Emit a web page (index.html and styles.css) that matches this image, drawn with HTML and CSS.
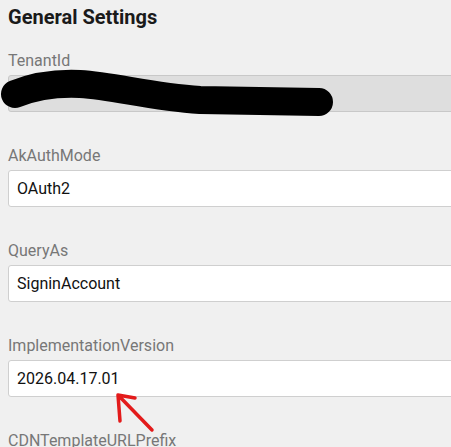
FILE: index.html
```html
<!DOCTYPE html>
<html>
<head>
<meta charset="utf-8">
<link rel="stylesheet" href="styles.css">
</head>
<body>
<div class="panel">
  <h2 class="title">General Settings</h2>
  <div class="field">
    <label class="label">TenantId</label>
    <div class="input disabled"></div>
  </div>
  <div class="field">
    <label class="label">AkAuthMode</label>
    <div class="input">OAuth2</div>
  </div>
  <div class="field">
    <label class="label">QueryAs</label>
    <div class="input">SigninAccount</div>
  </div>
  <div class="field">
    <label class="label">ImplementationVersion</label>
    <div class="input">2026.04.17.01</div>
  </div>
  <div class="field">
    <label class="label">CDNTemplateURLPrefix</label>
    <div class="input"></div>
  </div>
</div>
<svg class="scribble" width="451" height="447" viewBox="0 0 451 447">
  <path d="M15,94 C35,86 58,83 80,84 C115,86 150,97 200,100 L319,102" fill="none" stroke="#000" stroke-width="28" stroke-linecap="round" stroke-linejoin="round"/>
  <path d="M152,430 L118,395 M118,395 L135,398 M118,395 L120,421" fill="none" stroke="#e31b1b" stroke-width="3.5" stroke-linecap="round" stroke-linejoin="round"/>
</svg>
</body>
</html>
```

FILE: styles.css
```css
html, body {
  margin: 0;
  padding: 0;
  background: #f0f0f0;
  overflow: hidden;
  width: 451px;
  height: 447px;
  position: relative;
}
body {
  font-family: Roboto, "Liberation Sans", sans-serif;
}
.panel {
  padding: 5px 0 0 8px;
  display: flex;
  flex-direction: column;
}
.title {
  margin: 0 0 22px 0;
  font-size: 20px;
  line-height: 24px;
  font-weight: 700;
  color: #1a1a1a;
}
.field {
  display: flex;
  flex-direction: column;
  gap: 5px;
  margin-bottom: 34px;
}
.label {
  font-size: 16px;
  line-height: 19px;
  color: #777;
}
.input {
  width: 520px;
  height: 35px;
  box-sizing: content-box;
  border: 1px solid #cfcfcf;
  border-radius: 3px;
  background: #fff;
  padding: 0 8px;
  font-size: 16px;
  line-height: 35px;
  color: #111;
}
.input.disabled {
  background: #dedede;
  border-color: #c8c8c8;
}
.scribble {
  position: absolute;
  left: 0;
  top: 0;
  pointer-events: none;
}
```
